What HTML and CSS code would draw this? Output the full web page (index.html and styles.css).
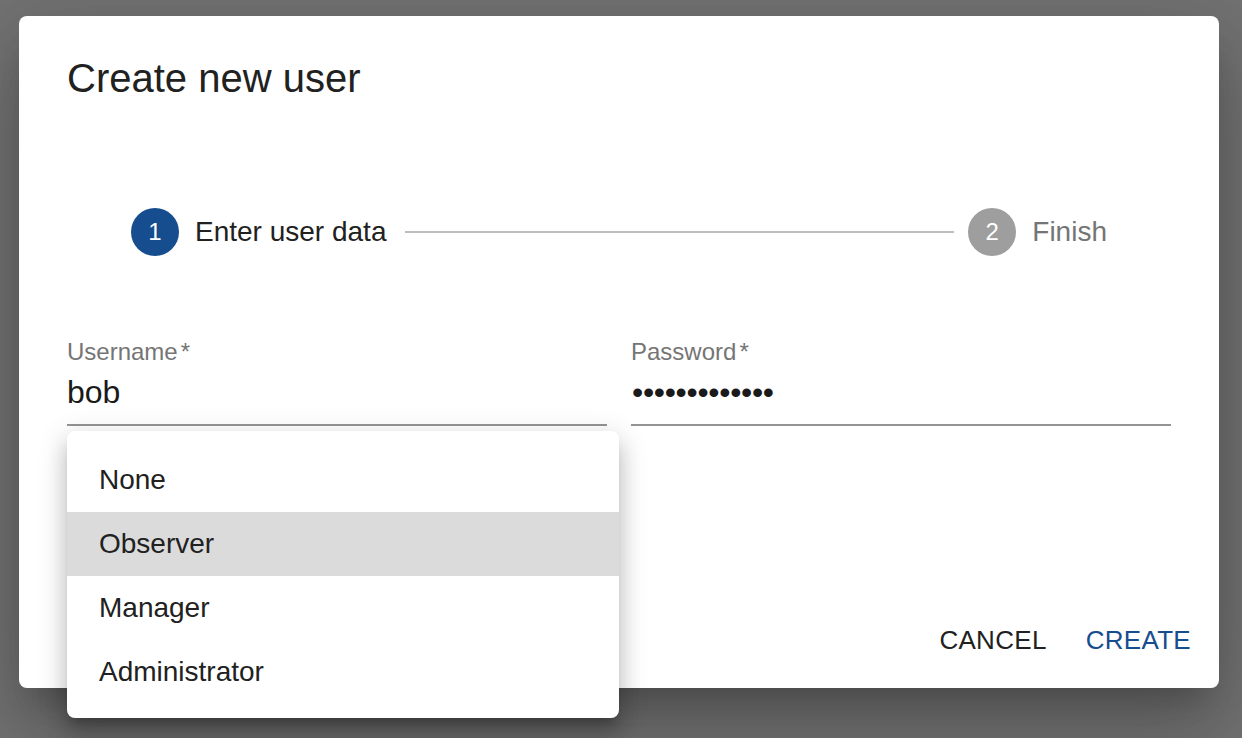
FILE: index.html
```html
<!DOCTYPE html>
<html lang="en">
<head>
<meta charset="utf-8">
<title>Create new user</title>
<link rel="stylesheet" href="styles.css">
</head>
<body>
<div class="dialog">
  <h2 class="dialog-title">Create new user</h2>
  <div class="stepper">
    <div class="step">
      <span class="step-icon active">1</span>
      <span class="step-label active">Enter user data</span>
    </div>
    <div class="connector"></div>
    <div class="step">
      <span class="step-icon">2</span>
      <span class="step-label">Finish</span>
    </div>
  </div>
  <div class="fields">
    <div class="field">
      <div class="field-label">Username<span class="req">*</span></div>
      <div class="field-input">bob</div>
      <ul class="menu">
        <li class="menu-item">None</li>
        <li class="menu-item selected">Observer</li>
        <li class="menu-item">Manager</li>
        <li class="menu-item">Administrator</li>
      </ul>
    </div>
    <div class="field">
      <div class="field-label">Password<span class="req">*</span></div>
      <div class="field-input dots">•••••••••••••</div>
    </div>
  </div>
  <div class="actions">
    <button class="btn">CANCEL</button>
    <button class="btn primary">CREATE</button>
  </div>
</div>
</body>
</html>
```

FILE: styles.css
```css
* { box-sizing: border-box; }
html, body { margin: 0; padding: 0; }
body {
  width: 1242px;
  height: 738px;
  overflow: hidden;
  background: #737373;
  font-family: "Liberation Sans", Arial, sans-serif;
  padding: 16px 0 0 19px;
}
.dialog {
  width: 1200px;
  height: 672px;
  background: #fff;
  border-radius: 8px;
  display: flex;
  flex-direction: column;
  padding: 0 48px;
  box-shadow: 0 22px 30px -14px rgba(0,0,0,0.2), 0 48px 76px 6px rgba(0,0,0,0.14), 0 18px 92px 16px rgba(0,0,0,0.12);
}
.dialog-title {
  margin: 0;
  padding-top: 30px;
  font-size: 40px;
  line-height: 64px;
  font-weight: 400;
  color: #212121;
}
.stepper {
  display: flex;
  align-items: center;
  padding: 98px 48px 48px;
}
.step {
  display: flex;
  align-items: center;
  padding: 0 16px;
}
.step-icon {
  width: 48px;
  height: 48px;
  border-radius: 50%;
  background: #9e9e9e;
  color: #fff;
  font-size: 24px;
  display: flex;
  align-items: center;
  justify-content: center;
  margin-right: 16px;
}
.step-icon.active { background: #164d8f; }
.step-label {
  font-size: 28px;
  color: #757575;
}
.step-label.active { color: #212121; }
.connector {
  flex: 1;
  border-top: 2px solid #bdbdbd;
  margin: 0 -2px 0 3px;
}
.fields {
  display: flex;
  gap: 24px;
  margin-top: 36px;
}
.field {
  position: relative;
  width: 540px;
  border-bottom: 2px solid #949494;
}
.field-label {
  font-size: 24px;
  line-height: 24px;
  color: #757575;
}
.req { margin-left: 3px; }
.field-input {
  margin-top: 9px;
  font-size: 32px;
  line-height: 38px;
  color: #1a1a1a;
  padding-bottom: 13px;
}
.field-input.dots {
  padding-left: 1px;
  letter-spacing: -0.3px;
}
.menu {
  position: absolute;
  left: 0;
  top: calc(100% + 7px);
  width: 552px;
  margin: 0;
  padding: 17px 0 14px;
  list-style: none;
  background: #fff;
  border-radius: 8px;
  box-shadow: 0 10px 10px -6px rgba(0,0,0,0.2), 0 16px 20px 2px rgba(0,0,0,0.14), 0 6px 28px 4px rgba(0,0,0,0.12);
  z-index: 2;
}
.menu-item {
  height: 64px;
  display: flex;
  align-items: center;
  padding-left: 32px;
  font-size: 28px;
  color: #212121;
}
.menu-item.selected { background: #dbdbdb; }
.actions {
  margin-top: auto;
  margin-right: -36px;
  padding-bottom: 12px;
  display: flex;
  justify-content: flex-end;
  gap: 7px;
}
.btn {
  height: 72px;
  padding: 0 16px;
  border: 0;
  background: transparent;
  font-family: "Liberation Sans", Arial, sans-serif;
  font-size: 26px;
  letter-spacing: 0.3px;
  color: #212121;
}
.btn.primary { color: #164d8f; }
```
